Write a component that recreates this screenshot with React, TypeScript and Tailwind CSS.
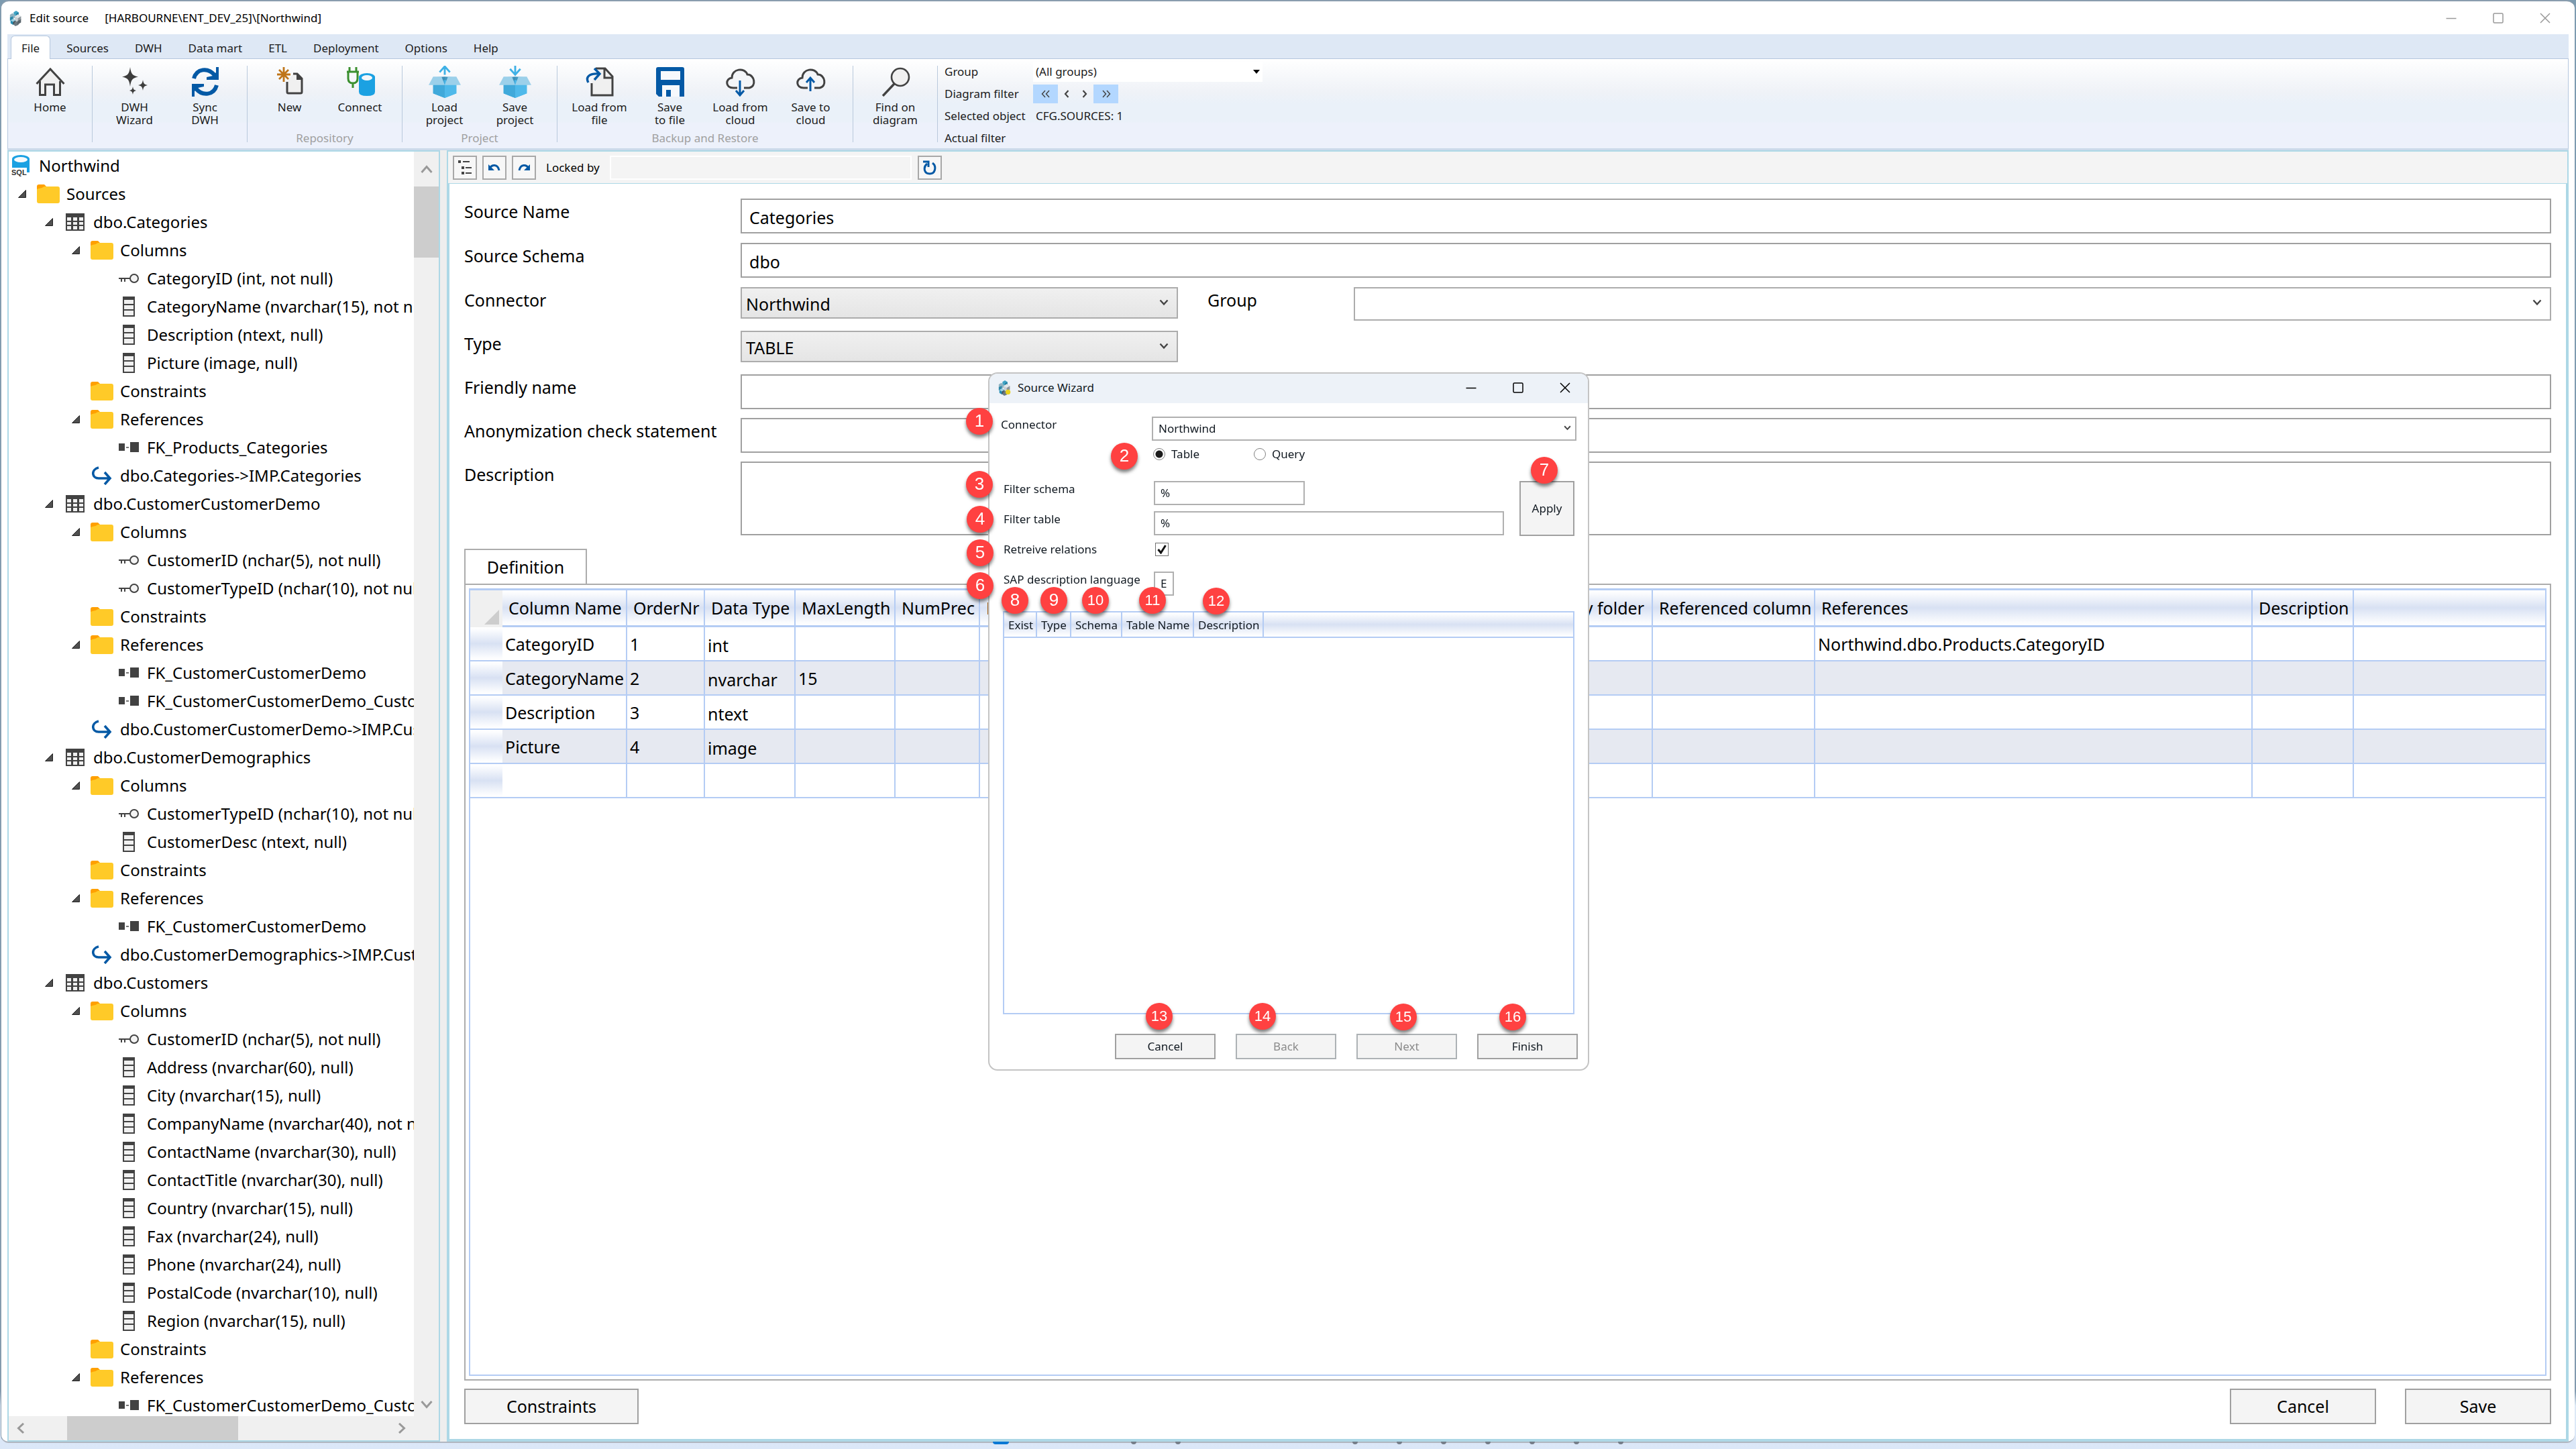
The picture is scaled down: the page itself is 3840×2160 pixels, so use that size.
import React from "react";

type IconProps = { className?: string };

/* ---------- window glyphs ---------- */

function AppLogo({ className = "h-6 w-6", accent = false }: IconProps & { accent?: boolean }) {
  return (
    <svg viewBox="0 0 24 26" className={className} aria-hidden="true">
      <path d="M12 1l4 2.5v4.5l-4 2.5l-4-2.5V3.500z" fill="#3fa3c4" />
      <path d="M12 6l4-2.500v4.500l-4 2.500z" fill="#1d7a9c" />
      <path d="M6 5l4 2.500v5l-4 2.500l-4-2.500v-5z" fill="#8fb3c2" />
      <path d="M2 12l5-2v6l-5 1z" fill="#2b87a8" />
      <path d="M15 7l5 3v6l-5 3l-5-3v-6z" fill="#c9cfd3" />
      <path d="M15 13l5-3v6l-5 3z" fill="#8c959b" />
      <path d="M10 10l5 3l5-3l-5-3z" fill="#e2e6e8" />
      <path d="M7 14l4 2.500v5L7 24l-4-2.500v-5z" fill="#258db3" />
      <path d="M7 19l4-2.500v5L7 24z" fill="#4b565d" />
      <path d="M3 16.500L7 19l4-2.500L7 14z" fill="#9fd0e2" />
      <path d="M11 17l5 3v4l-5 2l-3-2z" fill="#6d7a82" />
      {accent ? (
        <circle cx="17" cy="20" r="4" fill="#e9d21c" />
      ) : (
        <path d="M14 18l6-3v5l-6 4z" fill="#59656c" />
      )}
    </svg>
  );
}

function MinimizeIcon() {
  return (
    <svg viewBox="0 0 16 16" className="h-4 w-4" stroke="currentColor" strokeWidth="1.500" aria-hidden="true">
      <path d="M0.500 8.500h15" />
    </svg>
  );
}

function MaximizeIcon() {
  return (
    <svg viewBox="0 0 16 16" className="h-4 w-4" stroke="currentColor" strokeWidth="1.500" fill="none" aria-hidden="true">
      <rect x="1" y="1" width="14" height="14" rx="1.500" />
    </svg>
  );
}

function CloseIcon() {
  return (
    <svg viewBox="0 0 16 16" className="h-4 w-4" stroke="currentColor" strokeWidth="1.500" aria-hidden="true">
      <path d="M1 1l14 14M15 1L1 15" />
    </svg>
  );
}

function Chevron({ className = "" }: IconProps) {
  return (
    <svg viewBox="0 0 14 10" className={"pointer-events-none absolute " + className} fill="none" stroke="#444" strokeWidth="2.400" aria-hidden="true">
      <path d="M1.500 1.500L7 7.500l5.500-6" />
    </svg>
  );
}

/* ---------- ribbon icons ---------- */

const HomeIcon = () => (
  <svg viewBox="0 0 44 44" className="h-11 w-11" fill="#f0f0f0" stroke="#424242" strokeWidth="3" aria-hidden="true">
    <path d="M5 23L22 3l17 20v0h-4v18h-9V26h-8v15H9V23z" stroke="none" />
    <path d="M1.500 25L22 3l20.500 22" fill="none" />
    <path d="M6.500 21v20.500h8V26h13v15.500h9V21" fill="none" />
  </svg>
);

const SparkleIcon = () => (
  <svg viewBox="0 0 44 44" className="h-11 w-11" fill="#3d3d3d" aria-hidden="true">
    <path d="M15 0c1.500 10 3 12.500 12 14.500c-9 2-10.500 4.500-12 14.500c-1.500-10-3-12.500-12-14.500C12 12.500 13.500 10 15 0z" />
    <path d="M34 19c1 5.500 2 7 7 8c-5 1-6 2.500-7 8c-1-5.500-2-7-7-8c5-1 6-2.500 7-8z" />
    <path d="M19 29c.700 4 1.500 5 5 6c-3.500 1-4.300 2-5 6c-.700-4-1.500-5-5-6c3.500-1 4.300-2 5-6z" />
  </svg>
);

const SyncIcon = () => (
  <svg viewBox="0 0 44 44" className="h-11 w-11" fill="none" stroke="#0459a5" strokeWidth="6" aria-hidden="true">
    <path d="M5 17C9 2 26 0 36 12" />
    <path d="M39 27c-4 15-21 17-31 5" />
    <path d="M42 0v19H24v-4l9-2l5-5V0z" fill="#0459a5" stroke="none" />
    <path d="M2 44V25h18v4l-9 2l-5 5v8z" fill="#0459a5" stroke="none" />
  </svg>
);

const NewIcon = () => (
  <svg viewBox="0 0 44 44" className="h-11 w-11" fill="none" aria-hidden="true">
    <path d="M18 22v17h22V18l-7-8h-6" fill="#f0f0f0" />
    <path d="M18 22v15q0 2 2 2h18q2 0 2-2V17l-7-7h-6" stroke="#424242" strokeWidth="3" />
    <path d="M32 9l9 10h-9z" fill="#424242" />
    <path d="M13 0v22M3 11h20M6 4l14 14M20 4L6 18" stroke="#bf7519" strokeWidth="2.800" />
  </svg>
);

const ConnectIcon = () => (
  <svg viewBox="0 0 44 44" className="h-11 w-11" fill="none" aria-hidden="true">
    <path d="M20 14v23q0 6 12 6t12-6V14z" fill="#1ba1e2" />
    <ellipse cx="32" cy="15" rx="12" ry="6" fill="#1ba1e2" />
    <ellipse cx="32" cy="16" rx="8" ry="4" fill="#f3f7fa" />
    <path d="M6 0v7M16 0v7M2 7h18M4 7v10q0 7 7 7t7-7V7M11 24v7" stroke="#3a8f2e" strokeWidth="3" />
  </svg>
);

function BoxIcon({ up }: { up: boolean }) {
  return (
    <svg viewBox="0 0 50 50" className="h-[48px] w-[50px]" aria-hidden="true">
      <path d="M7 18h18v32L7 43z" fill="#45b1e3" />
      <path d="M43 18H25v32l18-7z" fill="#4fb9ea" />
      <path d="M8 18l17-1v26z" fill="#3c8fb8" />
      <path d="M42 18l-17-1v26z" fill="#4298c0" />
      <path d="M7 30l18-8v28L7 43z" fill="#40a9da" />
      <path d="M43 30l-18-8v28l18-7z" fill="#4fb9ea" />
      <path d="M7 17h13l5 13H0z" fill="#9bd0ea" />
      <path d="M43 17H30l-5 13h25z" fill="#9bd0ea" />
      {up ? (
        <path d="M25 14V2M17 10l8-9l8 9" fill="none" stroke="#3fb1e6" strokeWidth="3" />
      ) : (
        <path d="M25 0v13M17 5l8 9l8-9" fill="none" stroke="#3fb1e6" strokeWidth="3" />
      )}
    </svg>
  );
}

const LoadFileIcon = () => (
  <svg viewBox="0 0 44 44" className="h-11 w-11" fill="none" aria-hidden="true">
    <path d="M10 24v18h31V14L30 2H18" fill="#f0f0f0" />
    <path d="M10 24v18h31V14L30 2H16M29 2v14h12" stroke="#424242" strokeWidth="3" />
    <path d="M5 23C0 14 8 9 20 10M14 2l8 8l-8 9" stroke="#0459a5" strokeWidth="3.400" />
  </svg>
);

const FloppyIcon = () => (
  <svg viewBox="0 0 44 44" className="h-11 w-11" aria-hidden="true">
    <path d="M4 0h36q3 0 3 3v41H5l-4-4V3q0-3 3-3z" fill="#0459a5" />
    <path d="M8 6h29v13H8zM10 27h26v17H10z" fill="#f7f9fc" />
    <path d="M16 34h7v10h-7z" fill="#0459a5" />
  </svg>
);

function CloudIcon({ up }: { up: boolean }) {
  return (
    <svg viewBox="0 0 44 44" className="h-11 w-11" fill="none" aria-hidden="true">
      <path d="M17 31h-6C-1 31-1 17 9 16C9 2 28 0 32 11c11 0 14 18 3 20h-8" fill="#f3f5f8" stroke="#424242" strokeWidth="3" />
      <path d={up ? "M21 36V16M15 23l6-7l6 7" : "M21 20v22M15 35l6 7l6-7"} stroke="#0459a5" strokeWidth="3" />
    </svg>
  );
}

const FindIcon = () => (
  <svg viewBox="0 0 44 44" className="h-11 w-11" fill="none" stroke="#424242" aria-hidden="true">
    <circle cx="29" cy="15" r="13" fill="#f0f0f0" strokeWidth="2.600" />
    <path d="M20 25L3 43" strokeWidth="3.400" />
  </svg>
);

/* ---------- tree icons ---------- */

const FolderIcon = () => (
  <svg viewBox="0 0 34 28" className="h-7 w-[34px]" aria-hidden="true">
    <path d="M0 3q0-3 3-3h8l4 4v8H0z" fill="#ffa000" />
    <path d="M0 7l3-1q4 0 8-3h20q3 0 3 3v19q0 3-3 3H3q-3 0-3-3z" fill="#ffca28" />
  </svg>
);

const TableIcon = () => (
  <svg viewBox="0 0 28 26" className="h-[26px] w-7" aria-hidden="true">
    <path d="M0 0h28v26H0z" fill="#424242" />
    <path d="M2 6h6v5H2zM11 6h6v5h-6zM20 6h6v5h-6zM2 13h6v4H2zM11 13h6v4h-6zM20 13h6v4h-6zM2 19h6v5H2zM11 19h6v5h-6zM20 19h6v5h-6z" fill="#f0f0f0" />
  </svg>
);

const ColumnIcon = () => (
  <svg viewBox="0 0 18 30" className="h-[30px] w-[18px]" aria-hidden="true">
    <path d="M0 0h18v30H0z" fill="#424242" />
    <path d="M2 5h14v6H2zM2 13h14v6H2zM2 21h14v7H2z" fill="#f0f0f0" />
  </svg>
);

const KeyIcon = () => (
  <svg viewBox="0 0 30 18" className="h-[18px] w-[30px]" fill="none" stroke="#424242" strokeWidth="2" aria-hidden="true">
    <circle cx="23" cy="9" r="6" fill="#f4f4f4" />
    <path d="M0 9h17M4 9v5M9 9v5" />
  </svg>
);

const LinkIcon = () => (
  <svg viewBox="0 0 30 18" className="h-[18px] w-[30px]" aria-hidden="true">
    <path d="M0 3h9v11H0zM17 1h13v15H17z" fill="#424242" />
    <path d="M11 8h4v2h-4z" fill="#777" />
  </svg>
);

const FlowIcon = () => (
  <svg viewBox="0 0 30 28" className="h-7 w-[30px]" fill="none" stroke="#0459a5" strokeWidth="3.600" aria-hidden="true">
    <path d="M10 2C-2 5 0 18 10 18h17M19 9l8 9l-8 9" />
  </svg>
);

const SqlIcon = () => (
  <svg viewBox="0 0 28 32" className="h-8 w-7" aria-hidden="true">
    <path d="M1 6v20h26V6z" fill="#1ba1e2" />
    <ellipse cx="14" cy="6" rx="13" ry="6" fill="#1ba1e2" />
    <ellipse cx="14" cy="7" rx="10" ry="4" fill="#f5fafd" />
    <path d="M0 19h23v13H0z" fill="#fff" />
    <text x="0" y="30" fontSize="11" fontWeight="700" fontFamily="Liberation Sans, sans-serif" fill="#333">SQL</text>
  </svg>
);

type Kind = "folder" | "table" | "column" | "key" | "link" | "flow";
const treeIcons: Record<Kind, React.ReactNode> = {
  folder: <FolderIcon />,
  table: <TableIcon />,
  column: <ColumnIcon />,
  key: <KeyIcon />,
  link: <LinkIcon />,
  flow: <FlowIcon />,
};

type Node = { level: number; kind: Kind; text: string; open?: boolean };
const n = (level: number, kind: Kind, text: string, open = false): Node => ({ level, kind, text, open });

const tree: Node[] = [
  n(0, "folder", "Sources", true),
  n(1, "table", "dbo.Categories", true),
  n(2, "folder", "Columns", true),
  n(3, "key", "CategoryID (int, not null)"),
  n(3, "column", "CategoryName (nvarchar(15), not null)"),
  n(3, "column", "Description (ntext, null)"),
  n(3, "column", "Picture (image, null)"),
  n(2, "folder", "Constraints"),
  n(2, "folder", "References", true),
  n(3, "link", "FK_Products_Categories"),
  n(2, "flow", "dbo.Categories->IMP.Categories"),
  n(1, "table", "dbo.CustomerCustomerDemo", true),
  n(2, "folder", "Columns", true),
  n(3, "key", "CustomerID (nchar(5), not null)"),
  n(3, "key", "CustomerTypeID (nchar(10), not null)"),
  n(2, "folder", "Constraints"),
  n(2, "folder", "References", true),
  n(3, "link", "FK_CustomerCustomerDemo"),
  n(3, "link", "FK_CustomerCustomerDemo_Customers"),
  n(2, "flow", "dbo.CustomerCustomerDemo->IMP.CustomerCustomerDemo"),
  n(1, "table", "dbo.CustomerDemographics", true),
  n(2, "folder", "Columns", true),
  n(3, "key", "CustomerTypeID (nchar(10), not null)"),
  n(3, "column", "CustomerDesc (ntext, null)"),
  n(2, "folder", "Constraints"),
  n(2, "folder", "References", true),
  n(3, "link", "FK_CustomerCustomerDemo"),
  n(2, "flow", "dbo.CustomerDemographics->IMP.CustomerDemographics"),
  n(1, "table", "dbo.Customers", true),
  n(2, "folder", "Columns", true),
  n(3, "key", "CustomerID (nchar(5), not null)"),
  n(3, "column", "Address (nvarchar(60), null)"),
  n(3, "column", "City (nvarchar(15), null)"),
  n(3, "column", "CompanyName (nvarchar(40), not null)"),
  n(3, "column", "ContactName (nvarchar(30), null)"),
  n(3, "column", "ContactTitle (nvarchar(30), null)"),
  n(3, "column", "Country (nvarchar(15), null)"),
  n(3, "column", "Fax (nvarchar(24), null)"),
  n(3, "column", "Phone (nvarchar(24), null)"),
  n(3, "column", "PostalCode (nvarchar(10), null)"),
  n(3, "column", "Region (nvarchar(15), null)"),
  n(2, "folder", "Constraints"),
  n(2, "folder", "References", true),
  n(3, "link", "FK_CustomerCustomerDemo_Customers"),
];

const indent = ["pl-[14px]", "pl-[54px]", "pl-[94px]", "pl-[134px]"];

function TreePanel() {
  return (
    <aside className="flex w-[645px] shrink-0 flex-col border-2 border-[#add8e6] bg-white">
      <div className="flex min-h-0 flex-1">
        <ul className="min-w-0 flex-1 overflow-hidden text-[24px] text-black">
          <li className="flex h-[42px] items-center gap-[13px] whitespace-nowrap pl-1">
            <SqlIcon />
            <span>Northwind</span>
          </li>
          {tree.map((item, i) => (
            <li key={i} className={"flex h-[42px] items-center whitespace-nowrap " + indent[item.level]}>
              {item.open ? (
                <button aria-label={"Collapse " + item.text} className="mr-4 w-3 shrink-0">
                  <svg viewBox="0 0 12 12" className="h-3 w-3" aria-hidden="true">
                    <path d="M11.500 0.500v11H0.500z" fill="#505050" stroke="#222" />
                  </svg>
                </button>
              ) : (
                <span className="mr-4 w-3 shrink-0" />
              )}
              <span className="mr-[10px] flex w-[34px] shrink-0 justify-center">{treeIcons[item.kind]}</span>
              <span>{item.text}</span>
            </li>
          ))}
        </ul>
        <div className="flex w-[37px] shrink-0 flex-col items-center bg-[#f0f0f0]">
          <div className="flex h-[52px] items-center justify-center">
            <svg viewBox="0 0 18 12" className="h-3 w-[18px]" fill="none" stroke="#999" strokeWidth="3" aria-hidden="true">
              <path d="M1.500 11L9 2.500L16.500 11" />
            </svg>
          </div>
          <div className="h-[106px] w-full bg-[#cdcdcd]" />
          <div className="flex-1" />
          <div className="flex h-[34px] items-center justify-center">
            <svg viewBox="0 0 18 12" className="h-3 w-[18px]" fill="none" stroke="#999" strokeWidth="3" aria-hidden="true">
              <path d="M1.500 1L9 9.500L16.500 1" />
            </svg>
          </div>
        </div>
      </div>
      <div className="flex h-9 items-center bg-[#f0f0f0] pr-[37px]">
        <div className="flex w-[87px] items-center pl-3">
          <svg viewBox="0 0 12 16" className="h-4 w-3" fill="none" stroke="#999" strokeWidth="3" aria-hidden="true">
            <path d="M10 1L2.500 8l7.500 7" />
          </svg>
        </div>
        <div className="h-full w-[255px] bg-[#cdcdcd]" />
        <div className="flex flex-1 justify-end pr-3">
          <svg viewBox="0 0 12 16" className="h-4 w-3" fill="none" stroke="#999" strokeWidth="3" aria-hidden="true">
            <path d="M2 1l7.500 7L2 15" />
          </svg>
        </div>
      </div>
    </aside>
  );
}

/* ---------- ribbon ---------- */

type Item = { icon: React.ReactNode; label: string };
const groups: { caption: string; items: Item[] }[] = [
  { caption: "", items: [{ icon: <HomeIcon />, label: "Home" }] },
  { caption: "", items: [{ icon: <SparkleIcon />, label: "DWH\nWizard" }, { icon: <SyncIcon />, label: "Sync\nDWH" }] },
  { caption: "Repository", items: [{ icon: <NewIcon />, label: "New" }, { icon: <ConnectIcon />, label: "Connect" }] },
  { caption: "Project", items: [{ icon: <BoxIcon up />, label: "Load\nproject" }, { icon: <BoxIcon up={false} />, label: "Save\nproject" }] },
  {
    caption: "Backup and Restore",
    items: [
      { icon: <LoadFileIcon />, label: "Load from\nfile" },
      { icon: <FloppyIcon />, label: "Save\nto file" },
      { icon: <CloudIcon up={false} />, label: "Load from\ncloud" },
      { icon: <CloudIcon up />, label: "Save to\ncloud" },
    ],
  },
  { caption: "", items: [{ icon: <FindIcon />, label: "Find on\ndiagram" }] },
];

const tabs = ["Sources", "DWH", "Data mart", "ETL", "Deployment", "Options", "Help"];

function Ribbon() {
  return (
    <div className="mx-[9px] text-[17px] text-[#1b1b1b]">
      <nav className="flex h-9 items-end bg-[#dee8f5] pl-[5px]">
        <button className="-mb-px h-[35px] rounded-t-md border border-b-0 border-[#b5c7de] bg-white px-[15px] pt-px">File</button>
        <div className="flex h-9 items-center gap-[39px] pl-6 pt-[6px]">
          {tabs.map((t) => (
            <button key={t}>{t}</button>
          ))}
        </div>
      </nav>
      <div className="flex h-[137px] border border-b-[3px] border-[#b5c7de] border-b-[#ccdaea] bg-[linear-gradient(#ffffff,#eff2f7_37%,#eaf1f9_50%,#eaf1f9_70%,#edf1fb_72%,#edf1fb)] pt-[10px]">
        {groups.map((g, i) => (
          <div key={i} className="flex h-[114px] flex-col border-r border-[#b9c9dc] px-[10px]">
            <div className="flex h-[102px] shrink-0">
              {g.items.map((it) => (
                <button key={it.label} className="flex h-[94px] w-[105px] flex-col items-center whitespace-pre text-center leading-[19px]">
                  <span className="mb-1 flex h-12 items-center">{it.icon}</span>
                  {it.label}
                </button>
              ))}
            </div>
            <div className="text-center leading-3 text-[#a0a0a0]">{g.caption}</div>
          </div>
        ))}
        <div className="-mt-2 grid h-[132px] grid-cols-[132px_342px] auto-rows-[33px] items-center pl-[10px]">
          <label htmlFor="rib-group">Group</label>
          <div className="relative">
            <select id="rib-group" className="h-[30px] w-full appearance-none bg-white pl-1">
              <option>(All groups)</option>
            </select>
            <svg viewBox="0 0 10 6" className="pointer-events-none absolute right-1 top-3 h-[6px] w-[10px]" aria-hidden="true">
              <path d="M0 0h10L5 6z" fill="#000" />
            </svg>
          </div>
          <span>Diagram filter</span>
          <div className="flex items-center text-[#444]">
            <button aria-label="First" className="flex h-7 w-[37px] items-center justify-center bg-[#b3d7ff]">
              <svg viewBox="0 0 14 12" className="h-3 w-[14px]" fill="none" stroke="currentColor" strokeWidth="1.500" aria-hidden="true"><path d="M6 1L1.500 6L6 11M12 1L7.500 6l4.500 5" /></svg>
            </button>
            <button aria-label="Previous" className="flex w-[26px] justify-center">
              <svg viewBox="0 0 8 12" className="h-3 w-2" fill="none" stroke="currentColor" strokeWidth="2.200" aria-hidden="true"><path d="M6.500 1L2 6l4.500 5" /></svg>
            </button>
            <button aria-label="Next" className="flex w-[27px] justify-center">
              <svg viewBox="0 0 8 12" className="h-3 w-2" fill="none" stroke="currentColor" strokeWidth="2.200" aria-hidden="true"><path d="M1.500 1L6 6l-4.500 5" /></svg>
            </button>
            <button aria-label="Last" className="flex h-7 w-[37px] items-center justify-center bg-[#b3d7ff]">
              <svg viewBox="0 0 14 12" className="h-3 w-[14px]" fill="none" stroke="currentColor" strokeWidth="1.500" aria-hidden="true"><path d="M2 1l4.500 5L2 11M8 1l4.500 5L8 11" /></svg>
            </button>
          </div>
          <span>Selected object</span>
          <span className="pl-1">CFG.SOURCES: 1</span>
          <span>Actual filter</span>
          <span />
        </div>
      </div>
    </div>
  );
}

/* ---------- editor ---------- */

const inputCls = "h-[52px] w-full border-2 border-[#a0a0a0] bg-white px-[11px] pt-1 outline-none";

function ComboBox({ id, value, flat = false }: { id: string; value: string; flat?: boolean }) {
  return (
    <div className="relative">
      <select
        id={id}
        className={
          flat
            ? "h-[50px] w-full appearance-none border-2 border-[#acacac] bg-white pl-[6px]"
            : "h-[47px] w-full appearance-none border-2 border-[#acacac] bg-linear-to-b from-[#f0f0f0] to-[#e5e5e5] pl-[6px] pt-[2px]"
        }
      >
        <option>{value}</option>
      </select>
      <Chevron className="right-[14px] top-[18px] h-[10px] w-[14px]" />
    </div>
  );
}

const headGrad = "bg-[linear-gradient(#ffffff,#fbfcfe_8%,#d8e1f3_50%,#fbfcfe_92%,#ffffff)]";

const columns: { label: string; cls: string }[] = [
  { label: "Column Name", cls: "w-[186px]" },
  { label: "OrderNr", cls: "w-[116px]" },
  { label: "Data Type", cls: "w-[135px]" },
  { label: "MaxLength", cls: "w-[149px]" },
  { label: "NumPrec", cls: "w-[126px]" },
  { label: "NumScale", cls: "w-[160px]" },
  { label: "", cls: "w-[600px]" },
  { label: "Query folder", cls: "w-[243px]" },
  { label: "Referenced column", cls: "w-[242px]" },
  { label: "References", cls: "w-[652px]" },
  { label: "Description", cls: "w-[151px]" },
  { label: "", cls: "" },
];

const rows: string[][] = [
  ["CategoryID", "1", "int", "", "", "", "", "", "", "Northwind.dbo.Products.CategoryID", "", ""],
  ["CategoryName", "2", "nvarchar", "15", "", "", "", "", "", "", "", ""],
  ["Description", "3", "ntext", "", "", "", "", "", "", "", "", ""],
  ["Picture", "4", "image", "", "", "", "", "", "", "", "", ""],
  ["", "", "", "", "", "", "", "", "", "", "", ""],
];

function DefinitionTable() {
  return (
    <table className="w-full table-fixed border-separate border-spacing-0 text-left">
      <colgroup>
        <col className="w-12" />
        {columns.map((c, i) => (
          <col key={i} className={c.cls} />
        ))}
      </colgroup>
      <thead>
        <tr className="h-[55px]">
          <th aria-label="Select all rows" className="bg-[#f0f0f0] p-0 pr-[5px] pt-6">
            <svg viewBox="0 0 22 22" className="ml-auto h-[22px] w-[22px]" aria-hidden="true">
              <path d="M22 0v22H0z" fill="#cdcdcd" />
            </svg>
          </th>
          {columns.map((c, i) => (
            <th
              key={i}
              className={
                "whitespace-nowrap border-b-[3px] border-[#b4ccf4] p-0 font-normal " +
                headGrad +
                (i === columns.length - 1 ? "" : " border-r-2") +
                (c.label === "Query folder" ? " pr-[11px] text-right" : " pl-[9px]")
              }
            >
              {c.label}
            </th>
          ))}
        </tr>
      </thead>
      <tbody>
        {rows.map((r, ri) => (
          <tr key={ri} className={"h-[51px] " + (ri % 2 ? "bg-[#e6e9f1]" : "bg-white")}>
            <th aria-label={"Row " + (ri + 1)} className={"border-b-2 border-[#b4ccf4] p-0 " + headGrad} />
            {r.map((v, ci) => (
              <td
                key={ci}
                className={
                  "whitespace-nowrap border-b-2 border-[#b4ccf4] p-0 pl-1 " +
                  (ci === r.length - 1 ? "" : "border-r-2 ") +
                  (ci === 2 ? "pt-1" : "")
                }
              >
                {v}
              </td>
            ))}
          </tr>
        ))}
      </tbody>
    </table>
  );
}

const bigButton = "h-[53px] border-2 border-[#a0a0a0] bg-[#f4f4f4] pb-px";
const toolButton = "flex h-9 w-9 items-center justify-center border-2 border-[#a8a8a8] bg-[#f7f7f7]";
const rowLabel = "pt-[2px]";

function Editor() {
  return (
    <main className="flex min-w-0 flex-1 flex-col text-black">
      <div className="flex h-[50px] items-center border-2 border-b border-[#add8e6] bg-[#f4f4f4] pl-[7px] text-[17px]">
        <div className="flex gap-2">
          <button aria-label="Outline" className={toolButton}>
            <svg viewBox="0 0 20 22" className="h-[22px] w-5" fill="#444" aria-hidden="true">
              <path d="M0 0h4v4H0zM7 1h10v2H7zM5 9h4v4H5zM11 10h9v2h-9zM5 17h4v4H5zM11 18h9v2h-9z" />
            </svg>
          </button>
          <button aria-label="Undo" className={toolButton}>
            <svg viewBox="0 0 20 14" className="h-[14px] w-5" fill="none" stroke="#0459a5" strokeWidth="3" aria-hidden="true">
              <path d="M3 8C6 2 15 1 17 11" />
              <path d="M1 2v9h9z" fill="#0459a5" stroke="none" />
            </svg>
          </button>
          <button aria-label="Redo" className={toolButton}>
            <svg viewBox="0 0 20 14" className="h-[14px] w-5" fill="none" stroke="#0459a5" strokeWidth="3" aria-hidden="true">
              <path d="M17 8C14 2 5 1 3 11" />
              <path d="M19 2v9h-9z" fill="#0459a5" stroke="none" />
            </svg>
          </button>
        </div>
        <label htmlFor="locked" className="pl-[15px] pr-[15px]">Locked by</label>
        <input id="locked" readOnly className="h-9 w-[450px] border-2 border-white bg-[#f4f4f4] outline-none" />
        <button aria-label="Refresh" className={toolButton + " ml-[9px]"}>
          <svg viewBox="0 0 22 22" className="h-[22px] w-[22px]" fill="none" stroke="#0459a5" strokeWidth="3" aria-hidden="true">
            <path d="M15 4c6 4 5 16-4 16S1 10 7 5" />
            <path d="M1 2h8v8" />
          </svg>
        </button>
      </div>
      <div className="flex min-h-0 flex-1 flex-col border-4 border-t-0 border-[#add8e6] bg-white px-[22px] pb-[22px] pt-[22px] text-[25px] leading-[34px]">
        <div className="grid grid-cols-[412px_652px_44px_218px_1fr] grid-rows-[66px_66px_65px_65px_65px_65px_127px]">
          <label htmlFor="src-name" className={rowLabel}>Source Name</label>
          <div className="col-span-4"><input id="src-name" defaultValue="Categories" className={inputCls} /></div>
          <label htmlFor="src-schema" className={rowLabel}>Source Schema</label>
          <div className="col-span-4"><input id="src-schema" defaultValue="dbo" className={inputCls} /></div>
          <label htmlFor="connector" className={rowLabel}>Connector</label>
          <ComboBox id="connector" value="Northwind" />
          <span />
          <label htmlFor="group" className={rowLabel}>Group</label>
          <ComboBox id="group" value="" flat />
          <label htmlFor="type" className={rowLabel}>Type</label>
          <ComboBox id="type" value="TABLE" />
          <span className="col-span-3" />
          <label htmlFor="friendly" className={rowLabel}>Friendly name</label>
          <div className="col-span-4"><input id="friendly" className={inputCls} /></div>
          <label htmlFor="anon" className={rowLabel}>Anonymization check statement</label>
          <div className="col-span-4"><input id="anon" className={inputCls} /></div>
          <label htmlFor="desc" className={rowLabel}>Description</label>
          <div className="col-span-4"><textarea id="desc" className="block h-[110px] w-full resize-none border-2 border-[#a0a0a0] bg-white p-2 outline-none" /></div>
        </div>

        <div className="flex pt-[3px]">
          <button className="h-[52px] w-[183px] border-2 border-b-0 border-[#acacac] bg-white">Definition</button>
        </div>
        <div className="flex min-h-0 flex-1 border-2 border-[#acacac] p-[5px]">
          <div className="min-w-0 flex-1 border-2 border-t-[3px] border-[#b4ccf4]">
            <DefinitionTable />
          </div>
        </div>

        <div className="flex items-center justify-between pt-3">
          <button className={bigButton + " w-[260px]"}>Constraints</button>
          <div className="flex gap-[43px]">
            <button className={bigButton + " w-[218px]"}>Cancel</button>
            <button className={bigButton + " w-[218px]"}>Save</button>
          </div>
        </div>
      </div>
    </main>
  );
}

/* ---------- wizard dialog ---------- */

/* Numbered callouts that lie over the dialog. */
const callouts: [number, string][] = [
  [1, "-left-[35px] top-[51px]"],
  [2, "left-[181px] top-[103px]"],
  [3, "-left-[35px] top-[145px]"],
  [4, "-left-[34px] top-[197px]"],
  [5, "-left-[34px] top-[247px]"],
  [6, "-left-[34px] top-[296px]"],
  [7, "left-[807px] top-[124px]"],
  [8, "left-[18px] top-[318px]"],
  [9, "left-[76px] top-[318px]"],
  [10, "left-[138px] top-[318px]"],
  [11, "left-[223px] top-[318px]"],
  [12, "left-[318px] top-[319px]"],
  [13, "left-[233px] top-[938px]"],
  [14, "left-[387px] top-[938px]"],
  [15, "left-[597px] top-[939px]"],
  [16, "left-[760px] top-[939px]"],
];

const wizInput = "h-9 border-2 border-[#b0b0b0] bg-white px-2 outline-none";
const radioCls =
  "h-[18px] w-[18px] appearance-none rounded-full border border-[#808080] bg-white checked:bg-[radial-gradient(circle,#1b1b1b_0_5px,#ffffff_6px)]";
const wizButton = "h-[38px] w-[150px] border-2 bg-[#f4f4f4] border-[#a0a0a0] disabled:border-[#adb2b5] disabled:text-[#8a8a8a]";
const wizCols: [string, string][] = [
  ["Exist", "w-[49px]"],
  ["Type", "w-[51px]"],
  ["Schema", "w-[76px]"],
  ["Table Name", "w-[107px]"],
  ["Description", "w-[104px]"],
  ["", ""],
];

function Wizard() {
  return (
    <div className="pointer-events-none fixed inset-0 flex items-center justify-center pb-[10px] pl-[2px]">
      <section
        role="dialog"
        aria-label="Source Wizard"
        className="pointer-events-auto relative flex h-[1041px] w-[896px] flex-col rounded-[14px] border-2 border-[#c4c4c4] bg-white text-[17px] leading-[23px] text-[#101820]"
      >
        <header className="flex h-11 shrink-0 items-center rounded-t-xl bg-[#edf2f8] pb-[2px] pl-3 pr-[26px]">
          <AppLogo className="h-6 w-[22px]" accent />
          <h1 className="flex-1 pl-2">Source Wizard</h1>
          <div className="flex gap-[54px] text-black">
            <button aria-label="Minimize"><MinimizeIcon /></button>
            <button aria-label="Maximize"><MaximizeIcon /></button>
            <button aria-label="Close"><CloseIcon /></button>
          </div>
        </header>

        <div className="flex flex-1 flex-col px-[17px] pt-5">
          <div className="grid grid-cols-[225px_1fr]">
            <label htmlFor="wiz-connector">Connector</label>
            <div className="relative">
              <select id="wiz-connector" className="h-9 w-full appearance-none border-2 border-[#b0b0b0] bg-white pl-2">
                <option>Northwind</option>
              </select>
              <Chevron className="right-2 top-[13px] h-2 w-[11px]" />
            </div>
          </div>
          <div className="flex h-10 items-center pl-[227px]">
            <label className="flex w-[150px] items-center gap-[9px]">
              <input type="radio" name="mode" defaultChecked className={radioCls} />
              Table
            </label>
            <label className="flex items-center gap-[9px]">
              <input type="radio" name="mode" className={radioCls} />
              Query
            </label>
          </div>

          <div className="flex justify-between pl-1 pr-[3px] pt-5">
            <div className="grid grid-cols-[224px_522px] auto-rows-[45px]">
              <label htmlFor="f-schema">Filter schema</label>
              <div><input id="f-schema" defaultValue="%" className={wizInput + " block w-[225px]"} /></div>
              <label htmlFor="f-table">Filter table</label>
              <div><input id="f-table" defaultValue="%" className={wizInput + " block w-full"} /></div>
              <label htmlFor="f-rel">Retreive relations</label>
              <div className="relative pl-[2px] pt-[2px]">
                <input id="f-rel" type="checkbox" defaultChecked className="block h-5 w-5 appearance-none border border-[#707070] bg-white" />
                <svg viewBox="0 0 14 14" className="pointer-events-none absolute left-[5px] top-[5px] h-[14px] w-[14px]" fill="none" stroke="#111" strokeWidth="3" aria-hidden="true">
                  <path d="M1.500 7l4 5L12.500 1" />
                </svg>
              </div>
              <label htmlFor="f-lang">SAP description language</label>
              <div><input id="f-lang" defaultValue="E" className={wizInput + " block w-[30px]"} /></div>
            </div>
            <button className="h-[82px] w-[82px] border-2 border-[#a0a0a0] bg-[#f4f4f4]">Apply</button>
          </div>

          <div className="ml-[3px] mr-[3px] mt-[14px] h-[601px] border-2 border-[#b4ccf4]">
            <table className="w-full table-fixed border-separate border-spacing-0 text-left">
              <thead>
                <tr className="h-[38px]">
                  {wizCols.map(([c, w], i) => (
                    <th
                      key={i}
                      className={
                        "whitespace-nowrap border-b-2 border-[#b4ccf4] p-0 pl-[6px] pt-[2px] font-normal " + headGrad + " " + w + (i < 5 ? " border-r-2" : "")
                      }
                    >
                      {c}
                    </th>
                  ))}
                </tr>
              </thead>
            </table>
          </div>

          <div className="-mr-[2px] mt-[29px] flex justify-end gap-[30px]">
            <button className={wizButton}>Cancel</button>
            <button disabled className={wizButton}>Back</button>
            <button disabled className={wizButton}>Next</button>
            <button className={wizButton}>Finish</button>
          </div>
        </div>

        {callouts.map(([num, pos]) => (
          <span
            key={num}
            className={
              "absolute flex h-10 w-10 items-center justify-center rounded-full bg-[#ff4141] font-['Liberation_Sans',sans-serif] text-white shadow-[0_4px_5px_rgba(0,0,0,0.5)] " +
              (num > 9 ? "text-[22px] " : "text-[26px] ") +
              pos
            }
          >
            {num}
          </span>
        ))}
      </section>
    </div>
  );
}

/* Running-app markers of the task bar that show below the window edge. */
function TaskbarMarks() {
  return (
    <div className="absolute bottom-[7px] left-0 right-0 flex items-start justify-center pl-[60px]">
      <span className="h-1 w-6 rounded-b bg-[#0a78d4]" />
      <span className="ml-[182px] flex gap-[58px]">
        <i className="h-1 w-2 rounded-b bg-[#757d88]" />
        <i className="h-1 w-2 rounded-b bg-[#757d88]" />
      </span>
      <span className="ml-[256px] flex gap-[58px]">
        {[0, 1, 2, 3, 4, 5, 6].map((i) => (
          <i key={i} className="h-1 w-2 rounded-b bg-[#757d88]" />
        ))}
      </span>
    </div>
  );
}

export default function App() {
  return (
    <div className="relative flex h-screen w-full flex-col overflow-hidden bg-[linear-gradient(#7d9bb0,#8199ae_96%,#dde9f6_97%,#dbe7f8)] pb-[9px] pl-px pr-[2px] font-['Noto_Sans','Open_Sans',sans-serif]">
      <div className="flex min-h-0 flex-1 flex-col rounded-[12px] border-2 border-l border-r-0 border-[#8a9dae] border-b-[#b0b6c0] bg-white">
        <header className="flex h-[49px] shrink-0 items-center pl-[11px] pr-[36px] text-[17px] text-black">
          <AppLogo className="h-6 w-[22px]" />
          <h1 className="pl-[9px]">Edit source</h1>
          <span className="flex-1 pl-6">[HARBOURNE\ENT_DEV_25]\[Northwind]</span>
          <div className="flex gap-[54px] text-[#999]">
            <button aria-label="Minimize"><MinimizeIcon /></button>
            <button aria-label="Maximize"><MaximizeIcon /></button>
            <button aria-label="Close"><CloseIcon /></button>
          </div>
        </header>
        <Ribbon />
        <div className="mx-[9px] flex min-h-0 flex-1 gap-[10px] bg-[#eeeeee]">
          <TreePanel />
          <Editor />
        </div>
      </div>
      <TaskbarMarks />
      <Wizard />
    </div>
  );
}
